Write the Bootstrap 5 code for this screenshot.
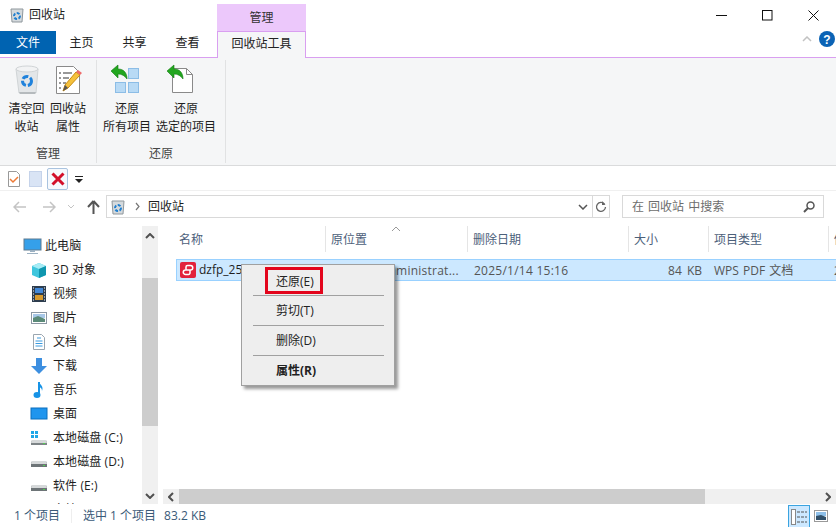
<!DOCTYPE html>
<html lang="zh-CN"><head><meta charset="utf-8"><title>回收站</title>
<link href="https://cdn.jsdelivr.net/npm/bootstrap@5.3.0/dist/css/bootstrap.min.css" rel="stylesheet">
<style>
html,body{height:100%;margin:0;overflow:hidden}
body{width:836px;height:527px;font:12px/16px "Open Sans","Noto Sans CJK SC",sans-serif;color:#1e1e1e;background:#fff}
.win{width:836px;height:527px;position:relative;overflow:hidden}
.titlebar{height:31px}
.titlename{width:217px;padding:7px 0 0 10px;gap:5px;font-size:12px}
.ctxhead{width:89px;margin-top:4px;background:#ecc8fb;text-align:center;line-height:27px;color:#333}
.winbtns{margin-left:auto;padding-right:0}
.winbtn{width:46px;height:31px}
.tabs{height:27px;border-bottom:1px solid #d99ff0}
.rtab{height:23px;line-height:24px;text-align:center;color:#222}
.rtab-file{width:56px;background:#0063b1;color:#fff}
.rtab-n{width:53px}
.rtab-n1{margin-left:-1px}
.rtab-ctx{width:89px;height:27px;margin-left:3px;background:#f5f6f7;border:1px solid #d99ff0;border-bottom:0;line-height:24px;position:relative;z-index:1;margin-bottom:-1px}
.tabright{margin-left:auto;gap:7px;padding:0 1px 5px 0}
.ribbon{height:108px;background:#f5f6f7;border-bottom:1px solid #dadbdc}
.rgroup{border-right:1px solid #e1e2e3;height:103px;margin-top:2px;position:relative}
.g1{width:97px}.g2{width:129px}
.rbtns{height:86px}
.rbtn{text-align:center;line-height:18px;white-space:nowrap}
.rbtn svg{display:block;margin:0 auto 4px}
.btn-a{width:37px;margin-left:8px}
.btn-b{width:38px;margin-left:4px}
.btn-c{width:48px;margin-left:6px}
.btn-c svg{margin-left:7px}
.btn-d{width:60px;margin-left:5px}
.btn-d svg{margin-left:10px}
.glabel{text-align:center;color:#444;line-height:16px}
.qat{height:25px;padding:2px 0 0 3px;gap:1px;border-bottom:1px solid #f0f0f0}
.qbtn{width:21px;height:22px}
.qbtn-on{border:1px solid #a9c3df;border-radius:2px;background:#f6f9fd}
.qdrop{margin-left:6px}
.addr{height:35px;padding:4px 12px 0 9px;background:#fff}
.navs{width:97px;height:23px;padding-left:4px;color:#bbb}
.nb1{margin-right:15px}.nb2{margin-right:11px}.nb3{margin-right:12px}
.addrbox{width:504px;height:23px;border:1px solid #d9d9d9;color:#1e1e1e}
.addrtext{padding-left:4px;gap:6px}
.addrtext span{margin-left:2px}
.addrright{margin-left:auto}
.divx{border-left:1px solid #d9d9d9;height:21px;width:17px}
.searchbox{width:202px;height:23px;margin-left:12px;border:1px solid #d9d9d9;padding:0 8px 0 9px;color:#6d6d6d;word-spacing:1px}
.mainarea{height:278px}
.sidebar{width:142px;height:278px;overflow:hidden;padding:8px 0 0 23px}
.sitem{height:24px;gap:4px;white-space:nowrap;font-size:12px;letter-spacing:.1px;padding-left:7px;margin-left:-1px}
.sitem-top{padding-left:0;margin-left:0;gap:2px}
.sitem svg{flex:none;width:20px;height:20px}
.vscroll{width:16px;height:278px;background:#f0f0f0;position:relative}
.vthumb{height:148px;background:#cdcdcd;margin-top:52px}
.sa{height:16px;color:#606060}
.sa-up{margin-top:2px}
.content{width:678px;position:relative;padding-left:18px;overflow:hidden}
.head{height:33px;color:#4c607a;position:relative}
.hcol{height:26px;line-height:27px;padding-left:5px;border-left:1px solid #e5e5e5;overflow:hidden;white-space:nowrap;flex:none}
.hcol:first-child{border-left:0;padding-left:3px}
.sorticon{position:absolute;left:215px;top:0}
.selrow{height:22px;background:#cce8ff;border:1px solid #99d1ff;border-right:0;line-height:22px;color:#555;white-space:nowrap;overflow:hidden}
.cell{overflow:hidden;flex:none}
.cname{gap:3px;padding-left:3px;color:#1e1e1e}
.cpath{padding-left:1px;letter-spacing:.25px}
.cdate{padding-left:6px;letter-spacing:.25px}
.csize{padding-right:7px;word-spacing:2px;text-align:right}
.ctype{padding-left:5px;word-spacing:1px}
.clast{padding-left:5px}
.hscroll{position:absolute;left:5px;right:0;bottom:0;height:15px;background:#f0f0f0}
.hthumb{width:526px;height:15px;background:#cdcdcd;margin-left:16px}
.harrow{position:absolute;top:3px}
.harrow-l{left:5px}.harrow-r{right:5px}
.statusbar{height:23px;padding-left:14px;position:relative;color:#3a5a78}
.vsep{border-left:1px solid #eee;height:14px;margin:0 11px}
.views{margin-left:auto;padding-right:4px;height:23px}
.viewbtn{width:22px;height:22px}
.viewbtn-on{background:#cce8ff;border:1px solid #3ba4e0;border-bottom:0}
.ctxmenu{position:absolute;left:241px;top:264px;width:154px;height:122px;background:#eee;border:1px solid #a0a0a0;box-shadow:3px 3px 3px rgba(0,0,0,.4);padding:2px 0 0 23px;z-index:5;color:#222}
.mitem{height:29px;line-height:30px;padding-left:11px}
.mitem-red{width:58px;height:27px;border:3px solid #e3051c;padding-left:8px;line-height:24px;margin-bottom:1px}
.msep{height:1px;background:#a0a0a0;margin:0 10px 0 -12px}
.mbold{font-weight:700}
.c1{width:149px}.c2{width:142px}.c3{width:161px}.c4{width:80px}.c5{width:120px}.c6{width:8px}
</style></head><body><div class="win">

<div class="titlebar d-flex">
 <div class="titlename d-flex align-items-start"><svg width="14" height="16" viewBox="0 0 14 16"><path d="M1 2h12l-1 13H2z" fill="#d5dadd" stroke="#8f979c"/><circle cx="7" cy="9" r="3" fill="none" stroke="#1f7fd0" stroke-width="2" stroke-dasharray="3 1.5"/></svg><span>回收站</span></div>
 <div class="ctxhead">管理</div>
 <div class="winbtns d-flex">
  <div class="winbtn d-flex align-items-center justify-content-center"><svg width="11" height="11"><path d="M0 5.5h11" stroke="#111"/></svg></div>
  <div class="winbtn d-flex align-items-center justify-content-center"><svg width="11" height="11"><rect x=".5" y=".5" width="9.500" height="9.500" fill="none" stroke="#111"/></svg></div>
  <div class="winbtn d-flex align-items-center justify-content-center"><svg width="11" height="11"><path d="M.5.5l10 10M10.500.5l-10 10" stroke="#111"/></svg></div>
 </div>
</div>

<div class="tabs d-flex align-items-start">
 <div class="rtab rtab-file">文件</div>
 <div class="rtab rtab-n rtab-n1">主页</div>
 <div class="rtab rtab-n">共享</div>
 <div class="rtab rtab-n">查看</div>
 <div class="rtab rtab-ctx">回收站工具</div>
 <div class="tabright d-flex align-items-center">
  <svg width="10" height="6"><path d="M1 5l4-4 4 4" fill="none" stroke="#c2c2c2" stroke-width="1.500"/></svg>
  <svg width="16" height="16" viewBox="0 0 16 16"><circle cx="8" cy="8" r="8" fill="#0b63b5"/><text x="8" y="12.500" text-anchor="middle" font-size="12" font-weight="700" fill="#fff" font-family="Liberation Sans">?</text></svg>
 </div>
</div>

<div class="ribbon d-flex">
 <div class="rgroup g1">
  <div class="rbtns d-flex pt-1">
   <div class="rbtn btn-a">
    <svg width="28" height="32" viewBox="0 0 28 32"><path d="M3 5l22 0-2 24H6z" fill="#e3e6e8" stroke="#d0d4d6"/><ellipse cx="14" cy="5" rx="11" ry="3" fill="#f2f3f4" stroke="#d0d4d6"/><path d="M6 28h17l-1 2H7z" fill="#b5babd"/><circle cx="14" cy="17" r="4.500" fill="none" stroke="#1f82dc" stroke-width="3" stroke-dasharray="6 2"/></svg>
    清空回<br>收站
   </div>
   <div class="rbtn btn-b">
    <svg width="28" height="32" viewBox="0 0 28 32"><path d="M2.500 2.500h17l6 6v21h-23z" fill="#fff" stroke="#8a8a8a"/><path d="M5 9h2M9 9h9M5 14h2M9 14h6M5 19h2M9 19h3M5 24h2" stroke="#777" stroke-width="1.500"/><path d="M9 27l2-6L22 8l4 3-12 13z" fill="#f5c13c" stroke="#c98a10"/><path d="M22 8l2-2 4 3-2 2z" fill="#ee6a6a"/><path d="M9 27l2-6 3 3z" fill="#555"/></svg>
    回收站<br>属性
   </div>
  </div>
  <div class="glabel">管理</div>
 </div>
 <div class="rgroup g2">
  <div class="rbtns d-flex pt-1">
   <div class="rbtn btn-c">
    <svg width="32" height="32" viewBox="0 0 32 32"><g fill="#b8daf5" stroke="#8cbde6"><rect x="18.500" y="4.500" width="10" height="10"/><rect x="5.500" y="18.500" width="10" height="10"/><rect x="18.500" y="18.500" width="10" height="10"/></g><path d="M1 7l7-6v4c6 0 9 4 9 10-2-3-5-5-9-5v4z" fill="#22a61f" stroke="#127a12" stroke-width=".6"/></svg>
    还原<br>所有项目
   </div>
   <div class="rbtn btn-d">
    <svg width="30" height="32" viewBox="0 0 30 32"><path d="M6.500 4.500h14l6 6v18h-20z" fill="#fff" stroke="#8a8a8a"/><path d="M20.500 4.500v6h6" fill="none" stroke="#8a8a8a"/><path d="M1 7l7-6v4c6 0 9 4 9 10-2-3-5-5-9-5v4z" fill="#22a61f" stroke="#127a12" stroke-width=".6"/></svg>
    还原<br>选定的项目
   </div>
  </div>
  <div class="glabel">还原</div>
 </div>
</div>

<div class="qat d-flex align-items-center">
 <div class="qbtn d-flex align-items-center justify-content-center"><svg width="14" height="16" viewBox="0 0 14 16"><path d="M1.500 .5h8l3 3v12h-11z" fill="#fff" stroke="#999"/><path d="M3 8l3 3 5-5" fill="none" stroke="#ee7a35" stroke-width="1.500"/></svg></div>
 <div class="qbtn d-flex align-items-center justify-content-center"><svg width="14" height="16"><rect x=".5" y=".5" width="12" height="15" fill="#d9e4f5" stroke="#c5d3ea"/></svg></div>
 <div class="qbtn qbtn-on d-flex align-items-center justify-content-center"><svg width="14" height="14" viewBox="0 0 14 14"><path d="M1.500 1.500l11 11M12.500 1.500l-11 11" stroke="#d3102a" stroke-width="3"/></svg></div>
 <svg class="qdrop" width="8" height="7"><path d="M0 .5h8" stroke="#222"/><path d="M0 3h8L4 7z" fill="#222"/></svg>
</div>

<div class="addr d-flex align-items-start">
 <div class="navs d-flex align-items-center">
  <svg width="14" height="12" class="nb1"><path d="M6 1L1 6l5 5M1 6h12" fill="none" stroke="#c4c4c4" stroke-width="1.500"/></svg>
  <svg width="14" height="12" class="nb2"><path d="M8 1l5 5-5 5M13 6H1" fill="none" stroke="#c4c4c4" stroke-width="1.500"/></svg>
  <svg width="8" height="5" class="nb3"><path d="M1 1l3 3 3-3" fill="none" stroke="#c4c4c4"/></svg>
  <svg width="13" height="14"><path d="M6.500 1L1 7M6.500 1L12 7M6.500 1v13" fill="none" stroke="#555" stroke-width="2"/></svg>
 </div>
 <div class="addrbox d-flex align-items-center">
  <div class="addrtext d-flex align-items-center">
   <svg width="14" height="16" viewBox="0 0 14 16" class="me-1"><path d="M1 2h12l-1 13H2z" fill="#d5dadd" stroke="#8f979c"/><circle cx="7" cy="9" r="3" fill="none" stroke="#1f7fd0" stroke-width="2" stroke-dasharray="3 1.500"/></svg>
   <svg width="5" height="9"><path d="M1 1l3 3.500L1 8" fill="none" stroke="#777" stroke-width="1.200"/></svg>
   <span>回收站</span>
  </div>
  <div class="addrright d-flex align-items-center">
   <svg width="10" height="6" class="me-1"><path d="M1 1l4 4 4-4" fill="none" stroke="#555" stroke-width="1.500"/></svg>
   <div class="divx d-flex align-items-center justify-content-center"><svg width="12" height="12" viewBox="0 0 12 12"><path d="M9.500 3A4.500 4.500 0 1 0 10.500 6" fill="none" stroke="#666" stroke-width="1.300"/><path d="M7 0v4h3.500z" fill="#666"/></svg></div>
  </div>
 </div>
 <div class="searchbox d-flex align-items-center justify-content-between"><span>在 回收站 中搜索</span><svg width="12" height="12"><circle cx="7.500" cy="4.500" r="3.500" fill="none" stroke="#555" stroke-width="1.500"/><path d="M5 7L1 11" stroke="#555" stroke-width="2"/></svg></div>
</div>

<div class="mainarea d-flex">
 <div class="sidebar">
  <div class="sitem sitem-top d-flex align-items-center"><svg viewBox="0 0 20 20"><rect x="1" y="3" width="17" height="11" fill="#35a0ea" stroke="#5e7a90"/><path d="M7 14h5v2H7zM4 17h11v1H4z" fill="#9cb1c2"/></svg><span>此电脑</span></div>
  <div class="sitem d-flex align-items-center"><svg viewBox="0 0 20 20"><path d="M3 6l7-3 7 3v9l-7 3-7-3z" fill="#3fc6dd"/><path d="M3 6l7 3 7-3-7-3z" fill="#a7ecf5"/><path d="M10 9v9l7-3V6z" fill="#0f96ae"/></svg><span>3D 对象</span></div>
  <div class="sitem d-flex align-items-center"><svg viewBox="0 0 20 20"><rect x="3" y="2" width="14" height="16" fill="#2d3d4e"/><rect x="6" y="4" width="8" height="5" fill="#4288d8"/><rect x="6" y="11" width="8" height="5" fill="#d89a2c"/><path d="M4 4h1M4 7h1M4 10h1M4 13h1M4 16h1M15 4h1M15 7h1M15 10h1M15 13h1M15 16h1" stroke="#fff"/></svg><span>视频</span></div>
  <div class="sitem d-flex align-items-center"><svg viewBox="0 0 20 20"><rect x="2.500" y="4.500" width="15" height="11" fill="#fff" stroke="#8c98a4"/><path d="M4 6h12v4H4z" fill="#a8c8e8"/><path d="M4 10l5-2 7 3v3H4z" fill="#5a8a78"/></svg><span>图片</span></div>
  <div class="sitem d-flex align-items-center"><svg viewBox="0 0 20 20"><path d="M4.500 2.500h8l3 3v12h-11z" fill="#fff" stroke="#9aa6b0"/><path d="M8 6h4M6.500 9h7M6.500 11.500h7M6.500 14h7" stroke="#3a9be0"/></svg><span>文档</span></div>
  <div class="sitem d-flex align-items-center"><svg viewBox="0 0 20 20"><path d="M7 2h6v8h5l-8 8-8-8h5z" fill="#3d8fe0"/></svg><span>下载</span></div>
  <div class="sitem d-flex align-items-center"><svg viewBox="0 0 20 20"><path d="M10 2v12" stroke="#1793e6" stroke-width="2"/><ellipse cx="8" cy="15" rx="3.500" ry="3" fill="#1793e6"/><path d="M10 2c1 3 5 4 3 9 0-3-2-4-3-4z" fill="#1793e6"/></svg><span>音乐</span></div>
  <div class="sitem d-flex align-items-center"><svg viewBox="0 0 20 20"><rect x="2" y="4" width="16" height="11" fill="#1f95ee" stroke="#0b6fbe"/></svg><span>桌面</span></div>
  <div class="sitem d-flex align-items-center"><svg viewBox="0 0 20 20"><path d="M2 3h3v3H2zM6 3h3v3H6zM2 7h3v3H2zM6 7h3v3H6z" fill="#1ea7e8"/><path d="M3 12h14l1 3v2H2v-2z" fill="#7d8487"/><path d="M3 12h14l1 3H2z" fill="#d6d9da"/><path d="M14 15.500h2" stroke="#4fd14f"/></svg><span>本地磁盘 (C:)</span></div>
  <div class="sitem d-flex align-items-center"><svg viewBox="0 0 20 20"><path d="M3 9h14l1 3v3H2v-3z" fill="#6d7477"/><path d="M3 9h14l1 3H2z" fill="#d6d9da"/><path d="M14 13.500h2" stroke="#4fd14f"/></svg><span>本地磁盘 (D:)</span></div>
  <div class="sitem d-flex align-items-center"><svg viewBox="0 0 20 20"><path d="M3 9h14l1 3v3H2v-3z" fill="#6d7477"/><path d="M3 9h14l1 3H2z" fill="#d6d9da"/><path d="M14 13.500h2" stroke="#4fd14f"/></svg><span>软件 (E:)</span></div>
  <div class="sitem d-flex align-items-center"><svg viewBox="0 0 20 20"><path d="M3 9h14l1 3v3H2v-3z" fill="#6d7477"/></svg><span>文档 (F:)</span></div>
 </div>
 <div class="vscroll d-flex flex-column">
  <div class="sa sa-up position-absolute top-0 start-0 w-100 d-flex align-items-center justify-content-center"><svg width="10" height="6"><path d="M1 5l4-4 4 4" fill="none" stroke="#505050" stroke-width="2"/></svg></div>
  <div class="vthumb"></div>
  <div class="sa position-absolute bottom-0 start-0 w-100 d-flex align-items-center justify-content-center"><svg width="10" height="6"><path d="M1 1l4 4 4-4" fill="none" stroke="#505050" stroke-width="2"/></svg></div>
 </div>
 <div class="content">
  <div class="head d-flex">
   <div class="hcol c1">名称</div><div class="hcol c2">原位置</div><div class="hcol c3">删除日期</div><div class="hcol c4">大小</div><div class="hcol c5">项目类型</div><div class="hcol c6">修改</div>
   <svg class="sorticon" width="10" height="6"><path d="M1 5l4-4 4 4" fill="none" stroke="#9a9a9a"/></svg>
  </div>
  <div class="selrow d-flex">
   <div class="cell c1 cname d-flex align-items-center"><svg width="16" height="16" viewBox="0 0 16 16"><rect width="16" height="16" rx="2" fill="#e2223c"/><path d="M6 7.500V5a1.500 1.500 0 0 1 1.500-1.500h3a1.500 1.500 0 0 1 0 4.500H7M10 8.500V11a1.500 1.500 0 0 1-1.500 1.500h-3a1.500 1.500 0 0 1 0-4.500H9" fill="none" stroke="#fff" stroke-width="1.500"/></svg><span>dzfp_25</span></div>
   <div class="cell c2 cpath">C:\Users\Administrat...</div>
   <div class="cell c3 cdate">2025/1/14 15:16</div>
   <div class="cell c4 csize">84 KB</div>
   <div class="cell c5 ctype">WPS PDF 文档</div>
   <div class="cell c6 clast">2</div>
  </div>
  <div class="hscroll d-flex">
   <div class="hthumb"></div>
   <svg class="harrow harrow-l" width="6" height="10"><path d="M5 1L1 5l4 4" fill="none" stroke="#505050" stroke-width="2"/></svg>
   <svg class="harrow harrow-r" width="6" height="10"><path d="M1 1l4 4-4 4" fill="none" stroke="#505050" stroke-width="2"/></svg>
  </div>
 </div>
</div>

<div class="statusbar d-flex align-items-center">
 <span>1 个项目</span><div class="vsep"></div><span>选中 1 个项目</span><span class="ms-2">83.2 KB</span>
 <div class="views d-flex align-items-end">
  <div class="viewbtn viewbtn-on d-flex align-items-center justify-content-center"><svg width="16" height="16"><rect x=".5" y=".5" width="4" height="15" fill="#fff" stroke="#888"/><path d="M6 3h10M6 8h10M6 13h10" stroke="#555" stroke-dasharray="3 1"/></svg></div>
  <div class="viewbtn d-flex align-items-center justify-content-center"><svg width="14" height="12"><rect x=".5" y=".5" width="13" height="11" fill="#fff" stroke="#999"/><path d="M2 2h10v4H2z" fill="#8ec0ea"/><path d="M2 6l5-1 5 2v3H2z" fill="#31506a"/></svg></div>
 </div>
</div>

<div class="ctxmenu">
 <div class="mitem mitem-red">还原(E)</div>
 <div class="msep"></div>
 <div class="mitem">剪切(T)</div>
 <div class="msep"></div>
 <div class="mitem">删除(D)</div>
 <div class="msep"></div>
 <div class="mitem mbold">属性(R)</div>
</div>
</div>
<script src="https://cdn.jsdelivr.net/npm/bootstrap@5.3.0/dist/js/bootstrap.bundle.min.js"></script>
</body></html>
